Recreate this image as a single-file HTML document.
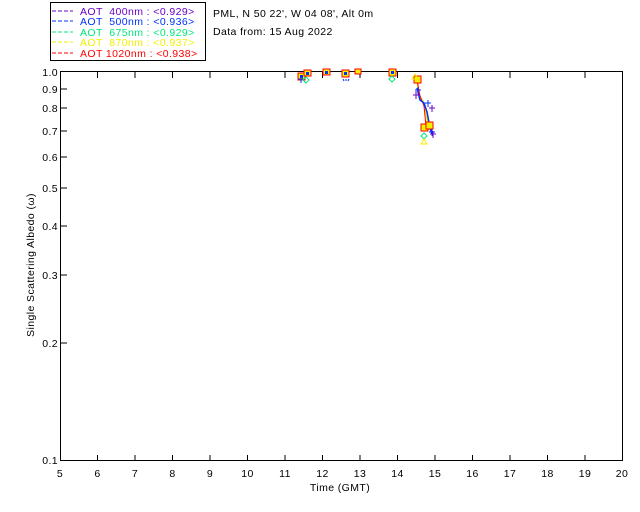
<!DOCTYPE html>
<html><head><style>body{margin:0;background:#fff}svg{display:block}text{font-family:"Liberation Sans",sans-serif;font-size:10.5px;letter-spacing:0.4px}</style></head>
<body>
<svg width="640" height="512" viewBox="0 0 640 512" xmlns="http://www.w3.org/2000/svg">
<rect x="50.5" y="2.5" width="155" height="58" fill="#fff" stroke="#000" stroke-width="1"/>
<g>
<line x1="52" y1="11" x2="73" y2="11" stroke="#6a00c8" stroke-dasharray="4,2"/><text x="80" y="15" fill="#6a00c8" xml:space="preserve">AOT  400nm : &lt;0.929&gt;</text>
<line x1="52" y1="21" x2="73" y2="21" stroke="#0030ff" stroke-dasharray="4,2"/><text x="80" y="25" fill="#0030ff" xml:space="preserve">AOT  500nm : &lt;0.936&gt;</text>
<line x1="52" y1="32" x2="73" y2="32" stroke="#00e87a" stroke-dasharray="4,2"/><text x="80" y="36" fill="#00e87a" xml:space="preserve">AOT  675nm : &lt;0.929&gt;</text>
<line x1="52" y1="42" x2="73" y2="42" stroke="#f0f000" stroke-dasharray="4,2"/><text x="80" y="46" fill="#f0f000" xml:space="preserve">AOT  870nm : &lt;0.937&gt;</text>
<line x1="52" y1="53" x2="73" y2="53" stroke="#ff0000" stroke-dasharray="4,2"/><text x="80" y="57" fill="#ff0000" xml:space="preserve">AOT 1020nm : &lt;0.938&gt;</text>
</g>
<text x="213" y="17">PML, N 50 22', W 04 08', Alt 0m</text>
<text x="213" y="35">Data from: 15 Aug 2022</text>
<rect x="60.5" y="71.5" width="562" height="389" fill="none" stroke="#000"/>
<g stroke="#000">
<path d="M97.5 461v-6M135 461v-6M172.5 461v-6M210 461v-6M247.5 461v-6M285 461v-6M322.5 461v-6M360 461v-6M397.5 461v-6M435 461v-6M472.5 461v-6M510 461v-6M547.5 461v-6M585 461v-6"/>
<path d="M97.5 72v6M135 72v6M172.5 72v6M210 72v6M247.5 72v6M285 72v6M322.5 72v6M360 72v6M397.5 72v6M435 72v6M472.5 72v6M510 72v6M547.5 72v6M585 72v6"/>
<path d="M61 89h6M61 108h6M61 131h6M61 157h6M61 188h6M61 226h6M61 275h6M61 343h6"/>
</g>
<g text-anchor="end">
<text x="58" y="76">1.0</text><text x="58" y="93">0.9</text><text x="58" y="112">0.8</text><text x="58" y="135">0.7</text><text x="58" y="161">0.6</text><text x="58" y="192">0.5</text><text x="58" y="230">0.4</text><text x="58" y="279">0.3</text><text x="58" y="347">0.2</text><text x="58" y="464">0.1</text>
</g>
<g text-anchor="middle">
<text x="60" y="477">5</text><text x="97.5" y="477">6</text><text x="135" y="477">7</text><text x="172.5" y="477">8</text><text x="210" y="477">9</text><text x="247.5" y="477">10</text><text x="285" y="477">11</text><text x="322.5" y="477">12</text><text x="360" y="477">13</text><text x="397.5" y="477">14</text><text x="435" y="477">15</text><text x="472.5" y="477">16</text><text x="510" y="477">17</text><text x="547.5" y="477">18</text><text x="585" y="477">19</text><text x="622" y="477">20</text>
<text x="340" y="491">Time (GMT)</text>
<text transform="translate(34,265) rotate(-90)">Single Scattering Albedo (ω)</text>
</g>
<polyline points="417,80 419,95 424,103 428,125 432,128" fill="none" stroke="#f0f000" stroke-width="1.5"/>
<polyline points="417,80 420,96 424,106 426,126 430,128" fill="none" stroke="#ff0000"/>
<polyline points="417,88 420,100 424,103 427,112 430,128 432,134" fill="none" stroke="#0030ff" stroke-width="1.5"/>
<g fill="#f0f000" stroke="#ff0000">
<rect x="298" y="73" width="7" height="7"/><rect x="304" y="70" width="7" height="6"/><rect x="323" y="69" width="7" height="6"/><rect x="342" y="70" width="7" height="7"/><rect x="355" y="69" width="6" height="5"/><rect x="389" y="69" width="7" height="7"/><rect x="414" y="76" width="7" height="7"/><rect x="421" y="124" width="7" height="7"/><rect x="426" y="122" width="7" height="7"/>
</g>
<g fill="#0030ff"><rect x="300" y="75" width="3" height="3"/><rect x="306" y="72" width="3" height="3"/><rect x="325" y="71" width="3" height="3"/><rect x="344" y="72" width="3" height="3"/><rect x="391" y="71" width="3" height="3"/></g>
<g stroke="#0030ff">
<path d="M298 79h7M301 76v7M415 90h6M418 87v7M425 103h6M428 100v7M429 132h6M432 129v7M343 79l1 2M346 79v2M349 79l-1 2"/>
</g>
<g stroke="#6a00c8"><path d="M413 95h7M416 91v8M429 108h6M432 105v7M430 134h6M433 131v7"/></g>
<g fill="none" stroke="#00e87a"><path d="M306 77l3 3-3 3-3-3z M392 76l3 3-3 3-3-3z M424 133l3 3-3 3-3-3z"/></g>
<g fill="none" stroke="#f0f000"><path d="M415 74l3 5h-6z M424 139l3 5h-6z"/></g>
</svg>
</body></html>
